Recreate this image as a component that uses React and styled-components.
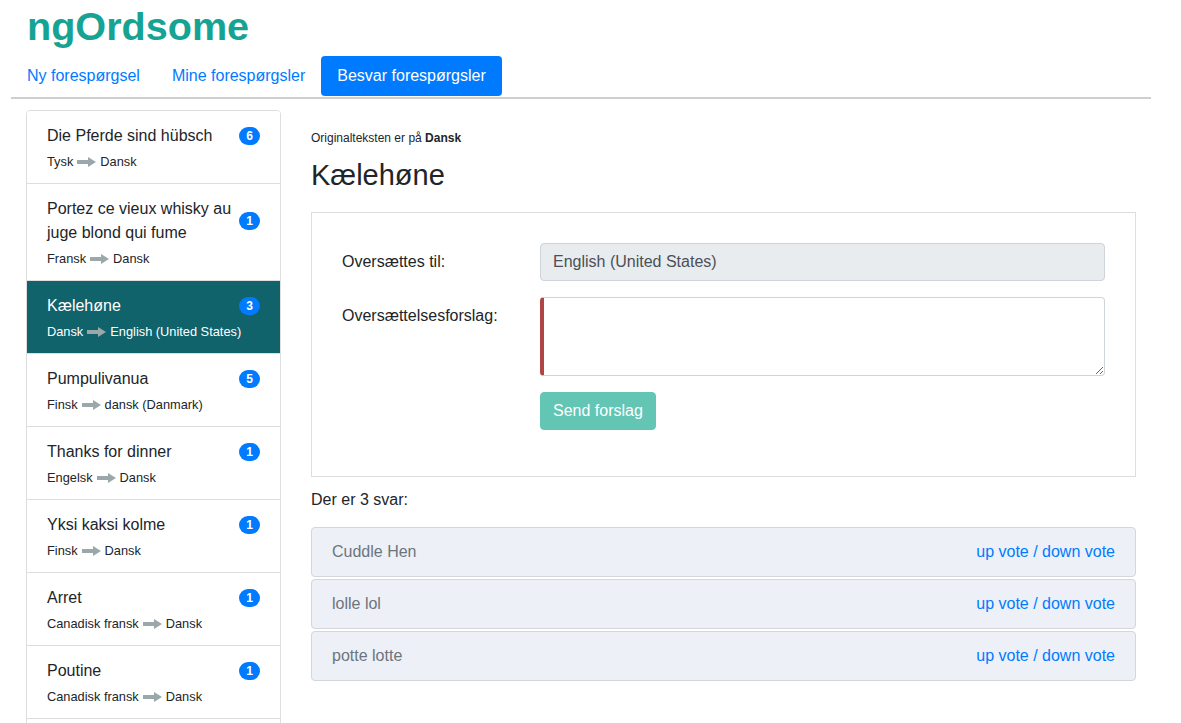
import React from "react";
import styled, { createGlobalStyle } from "styled-components";

const Global = createGlobalStyle`
  * { box-sizing: border-box; }
  body {
    margin: 0;
    font-family: "Liberation Sans", Arial, sans-serif;
    font-size: 16px;
    color: #212529;
    background: #fff;
  }
`;

const Page = styled.div`
  width: 1140px;
  margin-left: 11px;
`;

const Brand = styled.h1`
  margin: 0 0 6px;
  padding: 2px 16px 0;
  font-size: 39.6px;
  line-height: 48px;
  font-weight: 700;
  color: #16a394;
`;

const Nav = styled.nav`
  display: flex;
  padding-bottom: 1px;
  border-bottom: 2px solid #cfcfcf;
  margin-bottom: 11px;
`;

const NavLink = styled.a`
  display: block;
  padding: 8px 16px;
  line-height: 24px;
  font-size: 16px;
  border-radius: 4px;
  text-decoration: none;
  color: ${(p) => (p.$active ? "#fff" : "#007bff")};
  background: ${(p) => (p.$active ? "#007bff" : "transparent")};
  cursor: pointer;
`;

const Row = styled.div`
  display: flex;
`;

const SideCol = styled.aside`
  width: 285px;
  padding: 0 15px;
`;

const MainCol = styled.main`
  width: 855px;
  padding: 0 15px;
`;

const List = styled.div`
  border: 1px solid #dedede;
  border-radius: 4px;
  overflow: hidden;
`;

const Item = styled.div`
  padding: 13px 20px 12px;
  background: ${(p) => (p.$active ? "#10626b" : "#fff")};
  color: ${(p) => (p.$active ? "#fff" : "#212529")};
  border-top: ${(p) => (p.$first ? "none" : "1px solid #dedede")};
`;

const ItemHead = styled.div`
  display: flex;
  align-items: center;
  justify-content: space-between;
  gap: 8px;
`;

const ItemTitle = styled.div`
  font-size: 16px;
  line-height: 24px;
`;

const Badge = styled.span`
  flex: none;
  display: inline-block;
  background: #007bff;
  color: #fff;
  font-size: 12px;
  font-weight: 700;
  line-height: 1;
  padding: 3px 7px;
  border-radius: 10px;
`;

const Langs = styled.div`
  margin-top: 4px;
  font-size: 12.8px;
  line-height: 19px;
  display: flex;
  align-items: center;
  gap: 4px;
`;

const Arrow = () => (
  <svg width="19" height="10" viewBox="0 0 19 10" aria-hidden="true">
    <rect x="0" y="3" width="12" height="4" fill="#9aa8ab" />
    <polygon points="11,0 19,5 11,10" fill="#9aa8ab" />
  </svg>
);

const Small = styled.div`
  margin-top: 19px;
  font-size: 12px;
  line-height: 18px;
  b { font-weight: 700; }
`;

const Heading = styled.h2`
  margin: 11px 0 19px;
  font-size: 29px;
  line-height: 35px;
  font-weight: 400;
`;

const FormCard = styled.div`
  border: 1px solid #dedede;
  padding: 30px 30px 30px;
`;

const FormRow = styled.div`
  display: grid;
  grid-template-columns: 198px 1fr;
  margin-bottom: 16px;
`;

const Label = styled.label`
  padding-top: 7px;
  line-height: 24px;
  font-size: 16px;
`;

const ReadOnly = styled.div`
  height: 38px;
  padding: 6px 12px;
  line-height: 24px;
  background: #e9ecef;
  border: 1px solid #ced4da;
  border-radius: 4px;
  color: #495057;
`;

const TextArea = styled.textarea`
  display: block;
  width: 100%;
  height: 79px;
  padding: 6px 12px;
  font-family: inherit;
  font-size: 16px;
  border: 1px solid #ced4da;
  border-left: 4px solid #b04545;
  border-radius: 4px;
  outline: none;
  resize: vertical;
`;

const SendButton = styled.button`
  height: 38px;
  padding: 6px 12px;
  font-family: inherit;
  font-size: 16px;
  line-height: 24px;
  color: #fff;
  background: #63c5b4;
  border: 1px solid #63c5b4;
  border-radius: 4px;
`;

const Count = styled.p`
  margin: 11px 0 15px;
  line-height: 24px;
`;

const Answers = styled.div`
  display: flex;
  flex-direction: column;
  gap: 2px;
`;

const Answer = styled.div`
  display: flex;
  justify-content: space-between;
  padding: 12px 20px;
  line-height: 24px;
  background: #edf0f7;
  border: 1px solid #d3d6db;
  border-radius: 4px;
  color: #6c757d;
`;

const VoteLink = styled.a`
  color: #007bff;
  text-decoration: none;
`;

const Votes = styled.span`
  color: #007bff;
`;

const requests = [
  { t: "Die Pferde sind hübsch", from: "Tysk", to: "Dansk", n: 6 },
  { t: "Portez ce vieux whisky au juge blond qui fume", from: "Fransk", to: "Dansk", n: 1 },
  { t: "Kælehøne", from: "Dansk", to: "English (United States)", n: 3, active: true },
  { t: "Pumpulivanua", from: "Finsk", to: "dansk (Danmark)", n: 5 },
  { t: "Thanks for dinner", from: "Engelsk", to: "Dansk", n: 1 },
  { t: "Yksi kaksi kolme", from: "Finsk", to: "Dansk", n: 1 },
  { t: "Arret", from: "Canadisk fransk", to: "Dansk", n: 1 },
  { t: "Poutine", from: "Canadisk fransk", to: "Dansk", n: 1 },
  { t: "Hyvää huomenta", from: "Finsk", to: "Dansk", n: 1 },
];

const answers = ["Cuddle Hen", "lolle lol", "potte lotte"];

export default function App() {
  return (
    <>
      <Global />
      <Page>
        <Brand>ngOrdsome</Brand>
        <Nav>
          <NavLink>Ny forespørgsel</NavLink>
          <NavLink>Mine forespørgsler</NavLink>
          <NavLink $active>Besvar forespørgsler</NavLink>
        </Nav>
        <Row>
          <SideCol>
            <List>
              {requests.map((r, i) => (
                <Item key={i} $first={i === 0} $active={r.active}>
                  <ItemHead>
                    <ItemTitle>{r.t}</ItemTitle>
                    <Badge>{r.n}</Badge>
                  </ItemHead>
                  <Langs>
                    <span>{r.from}</span>
                    <Arrow />
                    <span>{r.to}</span>
                  </Langs>
                </Item>
              ))}
            </List>
          </SideCol>
          <MainCol>
            <Small>
              Originalteksten er på <b>Dansk</b>
            </Small>
            <Heading>Kælehøne</Heading>
            <FormCard>
              <FormRow>
                <Label>Oversættes til:</Label>
                <ReadOnly>English (United States)</ReadOnly>
              </FormRow>
              <FormRow>
                <Label>Oversættelsesforslag:</Label>
                <TextArea />
              </FormRow>
              <FormRow>
                <span />
                <div>
                  <SendButton disabled>Send forslag</SendButton>
                </div>
              </FormRow>
            </FormCard>
            <Count>Der er 3 svar:</Count>
            <Answers>
              {answers.map((a) => (
                <Answer key={a}>
                  <span>{a}</span>
                  <Votes>
                    <VoteLink href="#">up vote</VoteLink> / <VoteLink href="#">down vote</VoteLink>
                  </Votes>
                </Answer>
              ))}
            </Answers>
          </MainCol>
        </Row>
      </Page>
    </>
  );
}
